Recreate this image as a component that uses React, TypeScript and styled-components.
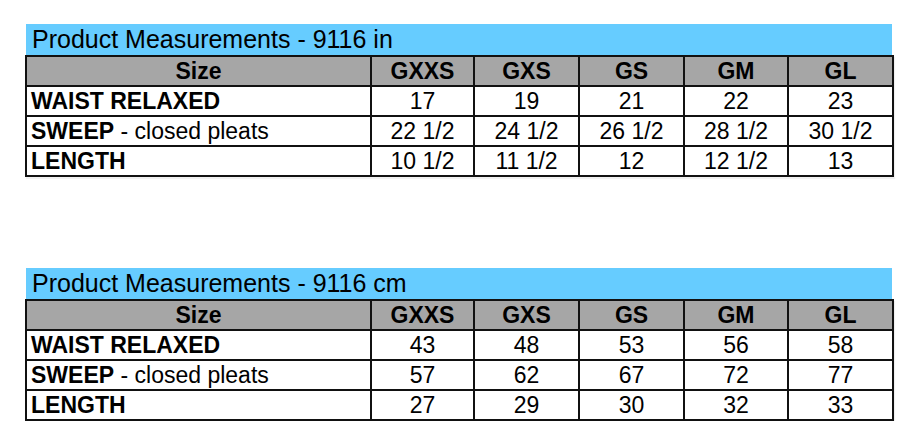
import React from "react";
import styled, { createGlobalStyle } from "styled-components";

const Global = createGlobalStyle`
  html, body { margin: 0; padding: 0; background: #ffffff; }
  body { font-family: "Liberation Sans", Arial, sans-serif; color: #000; }
`;

const Page = styled.div`
  display: flex;
  flex-direction: column;
  gap: 91px;
  padding: 24px 0 0 25px;
  width: 867px;
`;

const Block = styled.section`
  display: flex;
  flex-direction: column;
`;

const TitleBar = styled.div`
  background: #66ccff;
  height: 31px;
  margin-left: 1px;
  padding-left: 6px;
  display: flex;
  align-items: center;
  font-size: 25px;
  line-height: 1;
  white-space: nowrap;
`;

const Table = styled.table`
  border-collapse: collapse;
  table-layout: fixed;
  width: 867px;
  box-shadow: 1px 2px 1px rgba(0, 0, 0, 0.06);
`;

const HeadCell = styled.th`
  background: #a6a6a6;
  border: 2px solid #111;
  height: 28px;
  padding: 0;
  font-size: 23px;
  font-weight: bold;
  text-align: center;
  line-height: 1;
`;

const LabelCell = styled.td`
  border: 2px solid #111;
  height: 28px;
  padding: 0 0 0 4px;
  font-size: 23px;
  line-height: 1;
  white-space: nowrap;
`;

const ValueCell = styled.td`
  border: 2px solid #111;
  height: 28px;
  padding: 0;
  font-size: 23px;
  line-height: 1;
  text-align: center;
  white-space: nowrap;
`;

const Strong = styled.b`
  font-weight: bold;
`;

const sizes = ["GXXS", "GXS", "GS", "GM", "GL"];
const colWidths = [345, 103, 105, 105, 104, 105];

type Row = { label: React.ReactNode; values: string[] };

const inRows: Row[] = [
  { label: <Strong>WAIST RELAXED</Strong>, values: ["17", "19", "21", "22", "23"] },
  {
    label: (
      <>
        <Strong>SWEEP</Strong> - closed pleats
      </>
    ),
    values: ["22 1/2", "24 1/2", "26 1/2", "28 1/2", "30 1/2"],
  },
  { label: <Strong>LENGTH</Strong>, values: ["10 1/2", "11 1/2", "12", "12 1/2", "13"] },
];

const cmRows: Row[] = [
  { label: <Strong>WAIST RELAXED</Strong>, values: ["43", "48", "53", "56", "58"] },
  {
    label: (
      <>
        <Strong>SWEEP</Strong> - closed pleats
      </>
    ),
    values: ["57", "62", "67", "72", "77"],
  },
  { label: <Strong>LENGTH</Strong>, values: ["27", "29", "30", "32", "33"] },
];

function MeasureTable({ title, rows }: { title: string; rows: Row[] }) {
  return (
    <Block>
      <TitleBar>{title}</TitleBar>
      <Table>
        <colgroup>
          {colWidths.map((w, i) => (
            <col key={i} style={{ width: w }} />
          ))}
        </colgroup>
        <thead>
          <tr>
            <HeadCell>Size</HeadCell>
            {sizes.map((s) => (
              <HeadCell key={s}>{s}</HeadCell>
            ))}
          </tr>
        </thead>
        <tbody>
          {rows.map((r, i) => (
            <tr key={i}>
              <LabelCell>{r.label}</LabelCell>
              {r.values.map((v, j) => (
                <ValueCell key={j}>{v}</ValueCell>
              ))}
            </tr>
          ))}
        </tbody>
      </Table>
    </Block>
  );
}

export default function App() {
  return (
    <>
      <Global />
      <Page>
        <MeasureTable title="Product Measurements - 9116 in" rows={inRows} />
        <MeasureTable title="Product Measurements - 9116 cm" rows={cmRows} />
      </Page>
    </>
  );
}
